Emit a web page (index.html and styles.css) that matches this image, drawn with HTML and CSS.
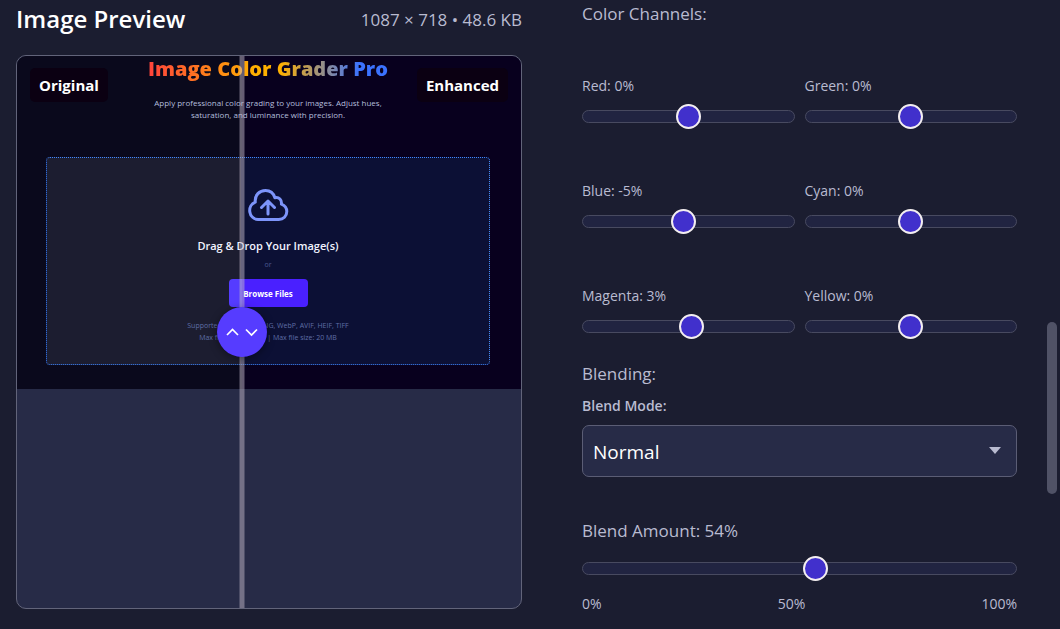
FILE: index.html
```html
<!DOCTYPE html>
<html lang="en">
<head>
<meta charset="utf-8">
<meta name="viewport" content="width=device-width, initial-scale=1">
<title>Image Color Grader Pro</title>
<link rel="stylesheet" href="styles.css">
</head>
<body>
<main class="editor">
  <section class="preview">
    <header class="preview-head">
      <h2 class="preview-title">Image Preview</h2>
      <span class="preview-meta">1087 × 718 • 48.6 KB</span>
    </header>
    <div class="compare">
      <div class="shot">
        <div class="shot-title">Image Color Grader Pro</div>
        <p class="shot-sub">Apply professional color grading to your images. Adjust hues,<br>saturation, and luminance with precision.</p>
        <div class="drop">
          <svg class="cloud" viewBox="0 0 42 34" aria-hidden="true">
            <path d="M11 31.500a9 9 0 0 1-2.700-17.300C7.500 7 12.500 2.500 18.500 2.500c4.500 0 8 2.700 9.400 7.200 4.200-.9 7.100 2.300 6.500 6.400 3.300 1.200 5.400 3.700 5.400 7.500 0 4.600-3.500 7.900-8 7.900zM21 26V13M14.500 19.500 21 13l6.500 6.500"/>
          </svg>
          <div class="drop-title">Drag &amp; Drop Your Image(s)</div>
          <div class="drop-or">or</div>
          <button class="browse" type="button">Browse Files</button>
          <p class="drop-note">Supported: JPG, JPEG, PNG, WebP, AVIF, HEIF, TIFF<br>Max files at once: 10 | Max file size: 20 MB</p>
        </div>
      </div>
      <span class="badge badge-left">Original</span>
      <span class="badge badge-right">Enhanced</span>
      <div class="divider"></div>
      <button class="knob" type="button" aria-label="Move comparison divider">
        <svg class="knob-icon" viewBox="0 0 34 12" aria-hidden="true"><path d="M2 9l5.500-5.500L13 9M21 3.500 26.500 9 32 3.500"/></svg>
      </button>
    </div>
  </section>

  <section class="controls">
    <h3 class="group-title">Color Channels:</h3>
    <div class="channels">
      <div class="field"><label class="label" for="red">Red: 0%</label><input class="slider" id="red" type="range" min="-100" max="100" value="0"></div>
      <div class="field"><label class="label" for="green">Green: 0%</label><input class="slider" id="green" type="range" min="-100" max="100" value="0"></div>
      <div class="field"><label class="label" for="blue">Blue: -5%</label><input class="slider" id="blue" type="range" min="-100" max="100" value="-5"></div>
      <div class="field"><label class="label" for="cyan">Cyan: 0%</label><input class="slider" id="cyan" type="range" min="-100" max="100" value="0"></div>
      <div class="field"><label class="label" for="magenta">Magenta: 3%</label><input class="slider" id="magenta" type="range" min="-100" max="100" value="3"></div>
      <div class="field"><label class="label" for="yellow">Yellow: 0%</label><input class="slider" id="yellow" type="range" min="-100" max="100" value="0"></div>
    </div>
    <h3 class="group-title">Blending:</h3>
    <div class="mode">
      <label class="label label-strong" for="mode">Blend Mode:</label>
      <div class="select-wrap">
        <select class="select" id="mode"><option>Normal</option><option>Multiply</option><option>Screen</option><option>Overlay</option></select>
      </div>
    </div>
    <div class="amount">
      <label class="group-title" for="amount">Blend Amount: 54%</label>
      <input class="slider" id="amount" type="range" min="0" max="100" value="54">
      <div class="scale"><span>0%</span><span>50%</span><span>100%</span></div>
    </div>
  </section>
</main>
<div class="scroll-thumb"></div>
</body>
</html>
```
FILE: styles.css
```css
* { box-sizing: border-box; }

body {
  margin: 0;
  background: #1b1d30;
  color: #b9bbd0;
  font-family: "Open Sans", "Noto Sans", sans-serif;
  overflow: hidden;
}

h2, h3, p { margin: 0; }
button, select, input { font-family: inherit; }

.editor {
  display: grid;
  grid-template-columns: 506fr 435fr;
  gap: 60px;
  align-items: start;
  padding: 0 43px 12px 16px;
}

/* Preview */
.preview { padding-top: 3px; }

.preview-head {
  display: flex;
  justify-content: space-between;
  align-items: center;
  height: 32px;
  margin-bottom: 20px;
}

.preview-title {
  color: #fff;
  font-size: 24px;
  font-weight: 600;
  line-height: 32px;
}

.preview-meta { font-size: 17px; }

.compare {
  position: relative;
  min-height: 554px;
  border: 1px solid #62647a;
  border-radius: 10px;
  background: #272b47;
  overflow: hidden;
}

.shot {
  display: flex;
  flex-direction: column;
  aspect-ratio: 1087 / 718;
  padding: 0 31px 24px 29px;
  background: linear-gradient(90deg, #0a091c 44.6%, #08001e 44.6%);
  text-align: center;
}

.shot-title {
  align-self: center;
  background: linear-gradient(90deg, #ff433c, #ffb000 45%, #ffb000 55%, #3b72ff 88%);
  -webkit-background-clip: text;
  background-clip: text;
  color: transparent;
  font-size: 20px;
  font-weight: 800;
  line-height: 26px;
}

.shot-sub {
  margin: 15px 0 36px;
  color: #b4bedd;
  font-size: 8px;
  line-height: 12px;
}

.drop {
  display: flex;
  flex: 1;
  flex-direction: column;
  align-items: center;
  padding-top: 30px;
  border: 1px dotted #3f86ff;
  border-radius: 4px;
  background: linear-gradient(90deg, #1c1d30 44%, #0c1035 44%);
}

.cloud {
  width: 42px;
  height: 34px;
  fill: none;
  stroke: #7d94fa;
  stroke-width: 3;
  stroke-linecap: round;
  stroke-linejoin: round;
}

.drop-title {
  margin-top: 16px;
  color: #f2f4ff;
  font-size: 11px;
  font-weight: 600;
  line-height: 16px;
}

.drop-or {
  margin: 5px 0 8px;
  color: #4a5690;
  font-size: 7px;
  line-height: 12px;
}

.browse {
  width: 79px;
  height: 28px;
  padding: 0;
  border: 0;
  border-radius: 4px;
  background: linear-gradient(90deg, #553cff 17%, #4a20ff 17%);
  color: #fff;
  font-size: 8px;
  font-weight: 700;
}

.drop-note {
  margin-top: 13px;
  color: #5f6ea6;
  font-size: 7px;
  line-height: 12px;
}

.badge {
  position: absolute;
  top: 12px;
  padding: 0 9px;
  border-radius: 5px;
  background: #0b0012;
  color: #fff;
  font-size: 15px;
  font-weight: 700;
  line-height: 34px;
}

.badge-left { left: 13px; }
.badge-right { right: 13px; }

.divider {
  position: absolute;
  top: 0;
  bottom: 0;
  left: 44.6%;
  width: 5px;
  background: rgba(194, 184, 200, 0.5);
  transform: translateX(-50%);
}

.knob {
  position: absolute;
  top: 50%;
  left: 44.6%;
  display: grid;
  place-items: center;
  width: 50px;
  height: 50px;
  padding: 0;
  border: 0;
  border-radius: 50%;
  background: #563cff;
  box-shadow: 0 2px 8px rgba(0, 0, 0, 0.4);
  transform: translate(-50%, -50%);
}

.knob-icon {
  width: 34px;
  height: 12px;
  fill: none;
  stroke: #fff;
  stroke-width: 1.7;
}

/* Controls */
.controls { padding-top: 1px; }

.group-title {
  display: block;
  font-size: 17px;
  font-weight: 400;
  line-height: 26px;
}

.channels {
  display: grid;
  grid-template-columns: 1fr 1fr;
  gap: 50px 10px;
  margin: 47px 0 22px;
}

.field, .mode {
  display: flex;
  flex-direction: column;
  gap: 6px;
}

.label {
  font-size: 14px;
  line-height: 24px;
}

.label-strong { font-weight: 600; }

.slider {
  -webkit-appearance: none;
  appearance: none;
  display: block;
  width: 100%;
  height: 25px;
  margin: 0;
  background: transparent;
}

.slider::-webkit-slider-runnable-track {
  height: 13px;
  border: 1px solid #484a60;
  border-radius: 7px;
  background: #212441;
}

.slider::-webkit-slider-thumb {
  -webkit-appearance: none;
  box-sizing: border-box;
  width: 25px;
  height: 25px;
  margin-top: -7px;
  border: 2px solid #f3eef0;
  border-radius: 50%;
  background: #4130cc;
}

.mode {
  gap: 7px;
  margin-top: 7px;
}

.select-wrap { position: relative; }

.select-wrap::after {
  content: "";
  position: absolute;
  top: 22px;
  right: 16px;
  border: 6px solid transparent;
  border-top: 7px solid #b9bbd0;
  border-bottom: 0;
  pointer-events: none;
}

.select {
  -webkit-appearance: none;
  appearance: none;
  display: block;
  width: 100%;
  height: 52px;
  padding: 2px 10px 0;
  border: 1px solid #5b5d75;
  border-radius: 7px;
  background: #272b47;
  color: #fff;
  font-size: 19px;
}

.amount {
  display: grid;
  gap: 12px;
  margin-top: 41px;
}

.scale {
  display: flex;
  justify-content: space-between;
  font-size: 14px;
  line-height: 22px;
}

.scroll-thumb {
  position: fixed;
  top: 322px;
  right: 3px;
  width: 10px;
  height: 172px;
  border-radius: 5px;
  background: #505266;
}
```
